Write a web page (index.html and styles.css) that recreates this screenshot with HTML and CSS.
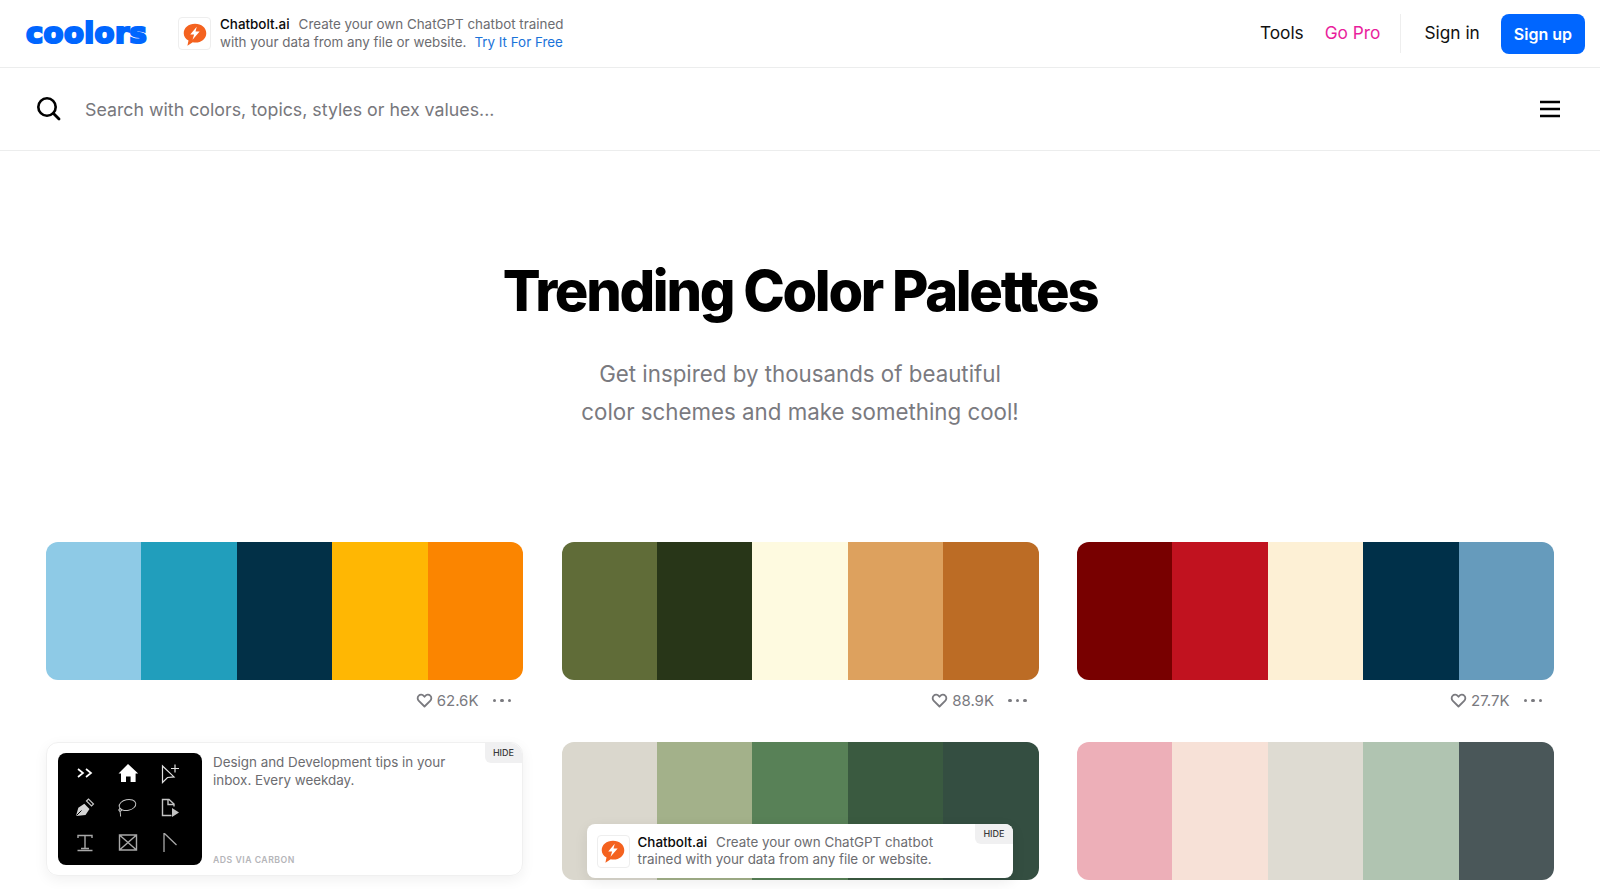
FILE: index.html
```html
<!doctype html>
<html>
<head>
<meta charset="utf-8">
<title>Trending Color Palettes</title>
<link rel="stylesheet" href="styles.css">
</head>
<body>

<svg class="defs" width="0" height="0">
  <symbol id="bolt" viewBox="0 0 24 24">
    <path fill="#f4621f" d="M12 2.600c6 0 10.400 3.800 10.400 8.600 0 5-4.400 8.700-10 8.700-.9 0-1.700-.1-2.500-.3L5 22.800l1-4.800C3.300 16.400 1.600 14 1.600 11.200 1.600 6.400 6 2.600 12 2.600z"/>
    <path fill="#fff" d="M13.600 5.200 7.600 12.400h3.600l-1.500 5 6.600-7.600h-3.800l1.100-4.600z"/>
  </symbol>
  <symbol id="heart" viewBox="0 0 24 24">
    <path fill="none" stroke="currentColor" stroke-width="2.600" stroke-linejoin="round" d="M12 20.500 4 12.600C1.800 10.400 1.800 7 3.900 5.100c2-1.900 5.200-1.700 7 .4L12 6.700l1.100-1.200c1.800-2.100 5-2.300 7-.4 2.100 1.900 2.100 5.300-.1 7.500z"/>
  </symbol>
</svg>

<header class="topbar">
  <a class="logo">coolors</a>
  <div class="topad">
    <span class="adicon"><svg width="26" height="26"><use href="#bolt"/></svg></span>
    <p class="adtext"><b>Chatbolt.ai</b>Create your own ChatGPT chatbot trained<br>with your data from any file or website.<a>Try It For Free</a></p>
  </div>
  <nav class="topnav">
    <a>Tools</a>
    <a class="pro">Go Pro</a>
    <span class="sep"></span>
    <a>Sign in</a>
    <a class="signup">Sign up</a>
  </nav>
</header>

<div class="searchbar">
  <svg class="searchicon" width="26" height="26" viewBox="0 0 26 26"><circle cx="12" cy="11" r="8.700" fill="none" stroke="#000" stroke-width="2.600"/><path d="M18.500 17.500 24 23" stroke="#000" stroke-width="2.800" stroke-linecap="round"/></svg>
  <span class="placeholder">Search with colors, topics, styles or hex values...</span>
  <svg class="burger" width="20" height="18" viewBox="0 0 20 18"><path d="M0 2h20M0 9h20M0 16h20" stroke="#000" stroke-width="2.400"/></svg>
</div>

<section class="hero">
  <h1>Trending Color Palettes</h1>
  <p>Get inspired by thousands of beautiful<br>color schemes and make something cool!</p>
</section>

<main class="palettes">
  <div class="item">
    <div class="palette">
      <i style="background:#8ecae6"></i><i style="background:#219ebc"></i><i style="background:#023047"></i><i style="background:#ffb703"></i><i style="background:#fb8500"></i>
    </div>
    <div class="meta"><svg width="17" height="17"><use href="#heart"/></svg><span>62.6K</span><em class="dots"><u></u><u></u><u></u></em></div>
  </div>
  <div class="item">
    <div class="palette">
      <i style="background:#606c38"></i><i style="background:#283618"></i><i style="background:#fefae0"></i><i style="background:#dda15e"></i><i style="background:#bc6c25"></i>
    </div>
    <div class="meta"><svg width="17" height="17"><use href="#heart"/></svg><span>88.9K</span><em class="dots"><u></u><u></u><u></u></em></div>
  </div>
  <div class="item">
    <div class="palette">
      <i style="background:#780000"></i><i style="background:#c1121f"></i><i style="background:#fdf0d5"></i><i style="background:#003049"></i><i style="background:#669bbc"></i>
    </div>
    <div class="meta"><svg width="17" height="17"><use href="#heart"/></svg><span>27.7K</span><em class="dots"><u></u><u></u><u></u></em></div>
  </div>

  <div class="item carbon">
    <div class="carbonimg">
      <svg width="144" height="112" viewBox="0 0 144 112" fill="none" stroke="#c4c4c4" stroke-width="1.200">
        <!-- row 1 -->
        <path stroke="#fff" stroke-width="1.700" d="M20 16l5 4-5 4M28 16l5 4-5 4"/>
        <path fill="#fff" stroke="none" d="M70 11 60.500 20.500H63V29h5v-5.500h4.600V29h5v-8.500h2.600z"/>
        <path stroke="#e0e0e0" d="M104.500 13v16.500l5-5 6.500-.6zM113 15.500h8M117 11.500v8"/>
        <!-- row 2 -->
        <path fill="#d4d4d4" stroke="none" d="M18 63l2.300-8.300 6-4 5.200 5.200-4 6z"/>
        <path stroke="#000" stroke-width="1" d="M18.500 62.500 23.500 57.500"/>
        <path d="M28.500 48l2-2 5 5-2 2z"/>
        <ellipse cx="69.500" cy="52" rx="8.400" ry="5.400" transform="rotate(-12 69.500 52)" stroke-width="1"/>
        <path d="M62 55c-.5 2.500.6 5 .6 8.500" stroke-width="1"/>
        <circle cx="62.200" cy="57" r="1.400" stroke-width="1"/>
        <path d="M116 53.500v-2.500l-5-4.500h-6.500v16h9M110 46.500v5h6" stroke-width="1.400"/>
        <path fill="#c4c4c4" stroke="none" d="M114 55l7 4.500-7 4.500z"/>
        <!-- row 3 -->
        <path d="M20 85v-2.500h14V85M27 82.500v13M23 95.500h8M19.500 97.500h15" stroke="#a8a8a8" stroke-width="1.400"/>
        <path d="M61.500 82h17v15h-17zM61.500 82l17 15M78.500 82l-17 15" stroke="#a8a8a8" stroke-width="1.400"/>
        <path d="M106 80v19M106.500 80.500l12 11.500" stroke="#a8a8a8" stroke-width="1.300"/>
      </svg>
    </div>
    <div class="carbontext">
      <p>Design and Development tips in your inbox. Every weekday.</p>
      <small>ADS VIA CARBON</small>
    </div>
    <span class="hide">HIDE</span>
  </div>

  <div class="item">
    <div class="palette">
      <i style="background:#dad7cd"></i><i style="background:#a3b18a"></i><i style="background:#588157"></i><i style="background:#3a5a40"></i><i style="background:#344e41"></i>
    </div>
    <div class="floatad">
      <span class="adicon"><svg width="26" height="26"><use href="#bolt"/></svg></span>
      <p class="adtext"><b>Chatbolt.ai</b>Create your own ChatGPT chatbot<br>trained with your data from any file or website.</p>
      <span class="hide">HIDE</span>
    </div>
  </div>

  <div class="item">
    <div class="palette">
      <i style="background:#edafb8"></i><i style="background:#f7e1d7"></i><i style="background:#dedbd2"></i><i style="background:#b0c4b1"></i><i style="background:#4a5759"></i>
    </div>
  </div>
</main>

</body>
</html>
```

FILE: styles.css
```css
* {
  box-sizing: border-box;
}

body {
  margin: 0;
  background: #fff;
  color: #000;
  font-family: Inter, "Liberation Sans", sans-serif;
}

p {
  margin: 0;
}

.defs {
  position: absolute;
}

/* top bar */
.topbar {
  display: flex;
  align-items: center;
  height: 68px;
  padding: 0 15px 0 26px;
  border-bottom: 1px solid #eceded;
}

.logo {
  width: 152px;
  flex: none;
  color: #0066ff;
  font-family: "DejaVu Sans", sans-serif;
  font-size: 29px;
  font-weight: 700;
  line-height: 1;
  letter-spacing: .4px;
  -webkit-text-stroke: 2.200px #0066ff;
}

.topad {
  display: flex;
  align-items: center;
  gap: 9px;
}

.adicon {
  display: flex;
  align-items: center;
  justify-content: center;
  width: 33px;
  height: 33px;
  flex: none;
  border: 1px solid #eeeeee;
  border-radius: 4px;
  background: #fff;
}

.adtext {
  color: #6c6c70;
  font-size: 13.400px;
  line-height: 17.500px;
  white-space: nowrap;
}

.adtext b {
  margin-right: 9px;
  color: #0a0a0a;
  font-weight: 500;
}

.adtext a {
  margin-left: 8px;
  color: #1a73d9;
}

.topnav {
  display: flex;
  align-items: center;
  margin-left: auto;
  font-size: 17.300px;
  color: #111;
}

.topnav a {
  margin: 0 21px 2px 0;
}

.topnav .pro {
  color: #e91e9c;
  margin-right: 20px;
}

.sep {
  width: 1px;
  height: 39px;
  margin-right: 23px;
  background: #eeeeee;
}

.topnav .signup {
  margin: 0;
  padding: 0 13px;
  height: 40px;
  line-height: 41px;
  border-radius: 8px;
  background: #0066ff;
  color: #fff;
  font-size: 16px;
  font-weight: 600;
}

/* search */
.searchbar {
  display: flex;
  align-items: center;
  height: 83px;
  padding: 0 40px 0 35px;
  border-bottom: 1px solid #eceded;
}

.searchicon {
  margin-right: 24px;
}

.placeholder {
  color: #77777c;
  font-size: 17.800px;
}

.burger {
  margin-left: auto;
}

/* heading */
.hero {
  padding-top: 105px;
  height: 391px;
  text-align: center;
}

.hero h1 {
  margin: 0;
  font-size: 56px;
  font-weight: 800;
  line-height: 70px;
  letter-spacing: -2.300px;
}

.hero p {
  margin-top: 29px;
  color: #7a7a7f;
  font-size: 22.300px;
  line-height: 38px;
}

/* palette grid */
.palettes {
  display: grid;
  grid-template-columns: repeat(3, 1fr);
  column-gap: 38.500px;
  align-items: start;
  padding: 0 46px 9px;
}

.item {
  position: relative;
}

.palette {
  display: flex;
  height: 138px;
  border-radius: 12px;
  overflow: hidden;
}

.palette i {
  flex: 1;
}

.meta {
  display: flex;
  align-items: center;
  justify-content: flex-end;
  height: 41px;
  margin-bottom: 21px;
  padding-right: 12px;
  color: #7a7a7f;
  font-size: 15px;
}

.meta span {
  margin-left: 4px;
}

.dots {
  display: flex;
  gap: 4px;
  margin-left: 14px;
}

.dots u {
  width: 3.500px;
  height: 3.500px;
  border-radius: 50%;
  background: #7a7a7f;
}

/* ads */
.carbon {
  display: flex;
  height: 134px;
  padding: 10px 11px;
  border: 1px solid #f0f0f0;
  border-radius: 12px;
  box-shadow: 0 4px 14px rgba(0, 0, 0, .06);
}

.carbonimg {
  width: 144px;
  height: 112px;
  flex: none;
  margin-right: 11px;
  border-radius: 8px;
  background: #000;
}

.carbonimg svg {
  display: block;
}

.carbontext {
  display: flex;
  flex-direction: column;
  justify-content: space-between;
  width: 250px;
}

.carbontext p {
  color: #6c6c70;
  font-size: 13.400px;
  line-height: 17.500px;
  margin-top: 1px;
}

.carbontext small {
  color: #b5b5b9;
  font-size: 8.700px;
  font-weight: 600;
  letter-spacing: .5px;
}

.hide {
  position: absolute;
  top: 0;
  right: 0;
  padding: 5px 8px;
  border-radius: 0 12px 0 6px;
  background: #f0f0f1;
  color: #3a3a3c;
  font-size: 9px;
  font-weight: 500;
  line-height: 10px;
}

.floatad {
  position: absolute;
  top: 82px;
  left: 25px;
  display: flex;
  align-items: center;
  gap: 8px;
  width: 426px;
  height: 54px;
  padding: 0 10px;
  border-radius: 8px;
  background: #fff;
  box-shadow: 0 4px 14px rgba(0, 0, 0, .08);
}

.floatad .hide {
  border-radius: 0 8px 0 6px;
}
```
